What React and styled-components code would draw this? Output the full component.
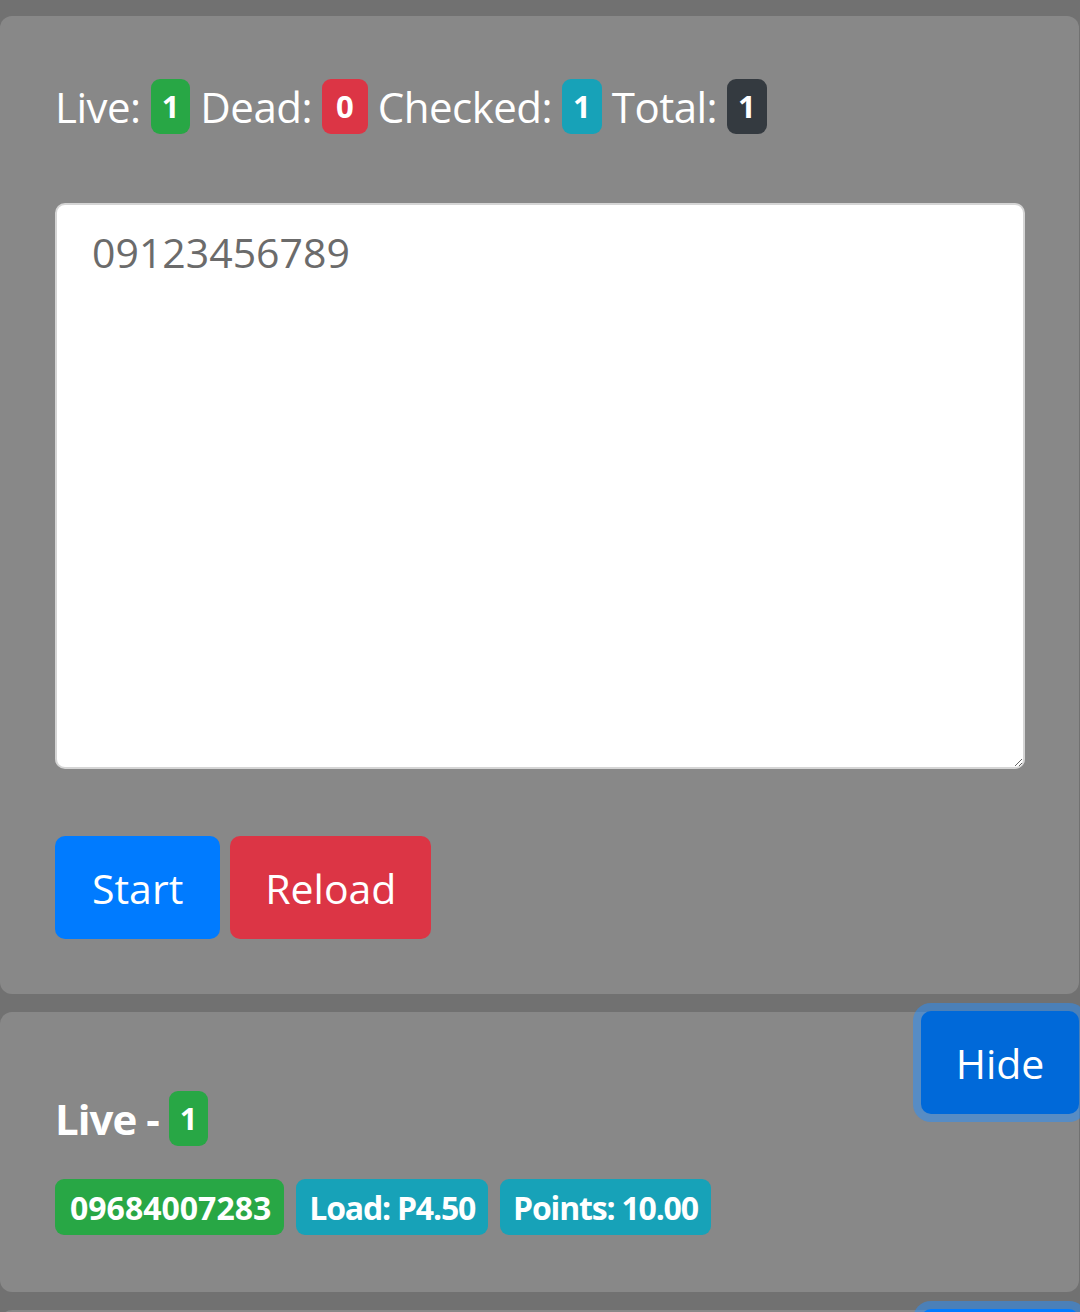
import styled, { createGlobalStyle } from "styled-components";

const GlobalStyle = createGlobalStyle`
  * {
    box-sizing: border-box;
  }
  html,
  body {
    margin: 0;
    padding: 0;
    background: #717171;
    font-family: "Open Sans", "Liberation Sans", sans-serif;
    overflow: hidden;
  }
`;

const colors = {
  success: "#28a745",
  danger: "#dc3545",
  info: "#17a2b8",
  dark: "#343a40",
  primary: "#007bff",
};

const Page = styled.div`
  display: flex;
  flex-direction: column;
  gap: 18px;
  padding-top: 16px;
  width: 1080px;
  height: 1312px;
  overflow: hidden;
`;

const Card = styled.div`
  background: #888888;
  border-radius: 12px;
  width: 1079px;
  padding: ${(p) => p.$padding || "55px"};
  color: #ffffff;
  flex-shrink: 0;

  &::after {
    content: "";
    display: block;
    clear: both;
  }
`;

const Stats = styled.div`
  display: flex;
  align-items: center;
  gap: 10px;
  margin-top: 8px;
  font-size: 42px;
  line-height: 55px;
  letter-spacing: -0.5px;
`;

const Badge = styled.span`
  display: inline-flex;
  align-items: center;
  justify-content: center;
  height: 55px;
  padding: 0 ${(p) => (p.$wide ? 14 : 11)}px;
  border-radius: 9px;
  background: ${(p) => colors[p.$variant]};
  color: #ffffff;
  font-size: 31px;
  font-weight: 700;
  line-height: 1;
  letter-spacing: 0;
`;

const Input = styled.textarea`
  display: block;
  width: 970px;
  height: 566px;
  margin-top: 69px;
  padding: 19px 35px;
  border: 2px solid #d5d5d5;
  border-radius: 10px;
  background: #ffffff;
  color: #6b6b6b;
  font-family: "Open Sans", "Liberation Sans", sans-serif;
  font-size: 41px;
  line-height: 1.4;
  resize: vertical;
  outline: none;
`;

const Actions = styled.div`
  display: flex;
  gap: 10px;
  margin-top: 67px;
`;

const Button = styled.button`
  height: 103px;
  padding: 0 ${(p) => p.$px || 37}px;
  border: none;
  border-radius: 10px;
  background: ${(p) => colors[p.$variant]};
  color: #ffffff;
  font-family: "Open Sans", "Liberation Sans", sans-serif;
  font-size: 41px;
  cursor: pointer;
`;

const HideButton = styled(Button)`
  float: right;
  width: 158px;
  margin-top: -1px;
  padding: 0;
  background: ${(p) => (p.$focused ? "#0069d9" : colors.primary)};
  box-shadow: 0 0 0 8px rgba(38, 143, 255, 0.5);
`;

const Title = styled.div`
  display: flex;
  align-items: center;
  gap: 10px;
  padding: 79px 0 0 55px;
  font-size: 42px;
  font-weight: 700;
  letter-spacing: -1px;
  line-height: 55px;
`;

const Results = styled.div`
  display: flex;
  gap: 12px;
  padding: 33px 0 57px 55px;
`;

const Chip = styled.span`
  display: inline-flex;
  align-items: center;
  height: 56px;
  padding: 0 13px 0 ${(p) => (p.$numeric ? 15 : 13)}px;
  border-radius: 9px;
  background: ${(p) => colors[p.$variant]};
  color: #ffffff;
  font-size: 32px;
  font-weight: 700;
  letter-spacing: ${(p) => (p.$numeric ? "0" : "-1.2px")};
`;

export default function App() {
  return (
    <>
      <GlobalStyle />
      <Page>
        <Card>
          <Stats>
            <span>Live:</span>
            <Badge $variant="success">1</Badge>
            <span>Dead:</span>
            <Badge $variant="danger" $wide>
              0
            </Badge>
            <span>Checked:</span>
            <Badge $variant="info">1</Badge>
            <span>Total:</span>
            <Badge $variant="dark">1</Badge>
          </Stats>
          <Input defaultValue="09123456789" />
          <Actions>
            <Button $variant="primary">Start</Button>
            <Button $variant="danger" $px={35}>
              Reload
            </Button>
          </Actions>
        </Card>

        <Card $padding="0">
          <HideButton $variant="primary" $focused>
            Hide
          </HideButton>
          <Title>
            <span>Live -</span>
            <Badge $variant="success">1</Badge>
          </Title>
          <Results>
            <Chip $variant="success" $numeric>
              09684007283
            </Chip>
            <Chip $variant="info">Load: P4.50</Chip>
            <Chip $variant="info">Points: 10.00</Chip>
          </Results>
        </Card>

        <Card $padding="0">
          <HideButton $variant="primary">Hide</HideButton>
        </Card>
      </Page>
    </>
  );
}
